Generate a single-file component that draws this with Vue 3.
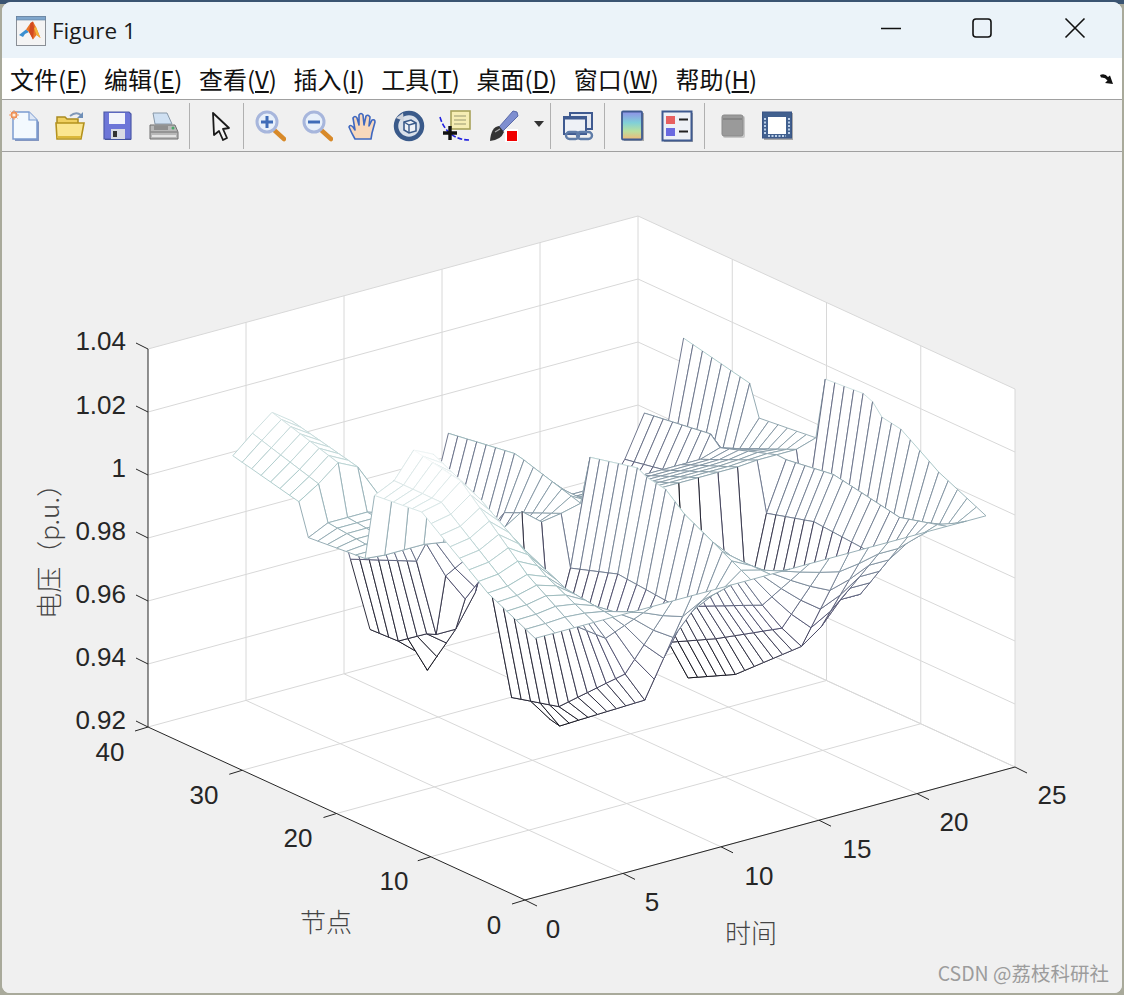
<template>
  <div class="desktop">
    <div class="window">
      <!-- 标题栏 -->
      <div class="titlebar">
        <svg class="logo" viewBox="0 0 30 30">
          <rect x="0.5" y="0.5" width="29" height="29" fill="#f4f4f4" stroke="#8a8f96" />
          <rect x="0.5" y="0.5" width="29" height="3.5" fill="#7fa6cc" stroke="#5f7f9f" stroke-width="0.6" />
          <path d="M3 19 L10 13.5 L13 16 L9 18 L7 21 Z" fill="#3a8fd0" />
          <path d="M10 13.5 L14.5 7 L17 5.5 L20 11 L24.5 22 L20.5 19 L17 23.5 L13 16 Z" fill="#e8752a" />
          <path d="M14.5 7 L17 5.5 L18 12 L17 23.5 L13 16 Z" fill="#d24a20" />
          <path d="M18 12 L20 11 L24.5 22 L20.5 19 Z" fill="#f2b53a" />
        </svg>
        <span class="title">Figure 1</span>
        <div class="controls">
          <svg class="ctrl" viewBox="0 0 20 20"><path d="M0 10.5 H20" /></svg>
          <svg class="ctrl" viewBox="0 0 20 20"><rect x="1" y="1" width="18" height="18" rx="3" /></svg>
          <svg class="ctrl" viewBox="0 0 20 20"><path d="M0.5 0.5 L19.5 19.5 M19.5 0.5 L0.5 19.5" /></svg>
        </div>
      </div>

      <!-- 菜单栏 -->
      <div class="menubar">
        <span v-for="m in menus" :key="m.name" class="menu">{{ m.name }}(<u>{{ m.key }}</u>)</span>
        <svg class="dock" viewBox="0 0 16 14">
          <path d="M1 3 Q6 1 9 5 L11 3.5 L14 12 L6 11 L8.5 8.5 Q6 5 2 5.5 Z" fill="#111" />
        </svg>
      </div>

      <!-- 工具栏 -->
      <div class="toolbar">
        <template v-for="t in tools" :key="t.id">
          <div v-if="t.id.startsWith('sep')" class="sep" :style="{ marginLeft: t.gap + 'px' }"></div>
          <svg v-else-if="t.id === 'drop'" class="drop" viewBox="0 0 12 8" :style="{ marginLeft: t.gap + 'px' }">
            <path d="M1 1 H11 L6 7 Z" fill="#333" />
          </svg>
          <svg v-else class="tool" viewBox="0 0 32 32" :style="{ marginLeft: t.gap + 'px' }">
            <g v-if="t.id === 'new'">
              <path d="M6 4 H22 L30 12 V31 H6 Z" fill="#8396c0" />
              <path d="M4 2 H20 L28 10 V29 H4 Z" fill="#f3f9fe" stroke="#7b9bd0" stroke-width="1.5" />
              <path d="M20 2 V10 H28" fill="#dfe8f6" stroke="#7b9bd0" stroke-width="1.2" />
              <circle cx="5" cy="5" r="3.4" fill="#f08a4a" />
              <path d="M5 0 V10 M0 5 H10 M1.5 1.5 L8.5 8.5 M8.5 1.5 L1.5 8.5" stroke="#f0a070" stroke-width="1" />
              <circle cx="5" cy="5" r="1.6" fill="#fff1e0" />
            </g>
            <g v-else-if="t.id === 'open'">
              <path d="M3 13 V7 H11 L13 9 H24 V14" fill="#f0d060" stroke="#a98a20" stroke-width="1.5" />
              <path d="M16 6 Q22 1 27 5" fill="none" stroke="#8098b8" stroke-width="1.8" />
              <path d="M29 2 V8 H23 Z" fill="#6f8fb8" />
              <path d="M2 13 H30 L27 29 H3 Z" fill="#fbe690" stroke="#b4921e" stroke-width="1.6" />
              <path d="M3 27 H27" stroke="#dcb83a" stroke-width="2" />
            </g>
            <g v-else-if="t.id === 'save'">
              <path d="M3 3 H29 V30 H3 Z" fill="#3c4c90" />
              <path d="M2 2 H27 L29 4 V29 H2 Z" fill="#6d76d8" stroke="#4d5aa8" stroke-width="1.2" />
              <rect x="7" y="3" width="16" height="11" fill="#f2f4fb" />
              <rect x="9" y="19" width="14" height="10" fill="#d8dae4" />
              <rect x="11" y="21" width="4" height="6" fill="#333" />
            </g>
            <g v-else-if="t.id === 'print'">
              <path d="M8 14 L6 3 H20 L25 14 Z" fill="#cfe0f2" stroke="#8898a8" />
              <path d="M3 15 H28 L31 22 V29 H3 Z" fill="#b8b8b8" stroke="#6f6f6f" />
              <path d="M3 22 H31" stroke="#8a8a8a" stroke-width="1.5" />
              <rect x="7" y="16" width="14" height="4" fill="#8f8f8f" />
              <circle cx="26" cy="18" r="1.5" fill="#4aa86a" />
              <path d="M5 26 H29" stroke="#e4e4e4" stroke-width="2" />
            </g>
            <g v-else-if="t.id === 'arrow'">
              <path d="M9 3 L25 18 L19 19 L23 28 L19 30 L15 21 L10 25 Z" fill="#f4f4f4" stroke="#1a1a1a" stroke-width="1.8" stroke-linejoin="round" />
            </g>
            <g v-else-if="t.id === 'zoomin' || t.id === 'zoomout'">
              <path d="M19 19 L30 29" stroke="#d88a2a" stroke-width="4.5" stroke-linecap="round" />
              <circle cx="13" cy="12" r="10" fill="#e8f0fa" stroke="#a7b6dc" stroke-width="3" />
              <path d="M7 12 H19" stroke="#3f6cb8" stroke-width="3" />
              <path v-if="t.id === 'zoomin'" d="M13 6 V18" stroke="#3f6cb8" stroke-width="3" />
            </g>
            <g v-else-if="t.id === 'hand'">
              <path d="M8 29 Q4 22 2 17 Q3 14 6 17 L8 20 L6 8 Q8 5 10 8 L12 15 L12 5 Q14 2 16 5 L17 15 L19 6 Q21 4 23 7 L22 16 L25 10 Q28 9 28 12 L25 23 L24 29 Z" fill="#f8d8bc" stroke="#3f68c0" stroke-width="1.6" stroke-linejoin="round" />
            </g>
            <g v-else-if="t.id === 'rotate'">
              <circle cx="16" cy="16" r="13" fill="#d9e0ea" stroke="#3a5a8a" stroke-width="4.5" />
              <path d="M3 8 L10 3 L11 11 Z" fill="#d0d4dc" />
              <path d="M11 12 L18 10 L23 13 V21 L16 23 L11 20 Z" fill="#eef1f6" stroke="#3a5a8a" stroke-width="1.6" />
              <path d="M11 12 L16 15 L23 13 M16 15 V23" fill="none" stroke="#3a5a8a" stroke-width="1.4" />
            </g>
            <g v-else-if="t.id === 'datatip'">
              <rect x="12" y="1" width="19" height="18" fill="#f6edb4" stroke="#a8a25a" stroke-width="1.6" />
              <path d="M15 6 H27 M15 10 H27 M15 14 H27" stroke="#b8b486" stroke-width="1.6" />
              <path d="M1 7 Q4 18 12 24 Q20 30 30 30" fill="none" stroke="#2222e0" stroke-width="1.6" stroke-dasharray="5 2" />
              <path d="M4 23 H18 M11 16 V30" stroke="#111" stroke-width="3.4" />
            </g>
            <g v-else-if="t.id === 'brush'">
              <path d="M30 2 L26 1 L12 17 L16 21 L31 6 Z" fill="#7f8fd0" stroke="#5a6aa8" />
              <path d="M12 16 Q4 17 3 31 Q14 30 17 22 Z" fill="#333" />
              <path d="M8 22 L13 19" stroke="#aaa" stroke-width="1.2" />
              <rect x="18" y="19" width="13" height="13" fill="#fff" />
              <rect x="20" y="21" width="10" height="10" fill="#f00000" />
            </g>
            <g v-else-if="t.id === 'link'">
              <rect x="8" y="3" width="22" height="16" fill="#e4e8f0" stroke="#3f5a90" stroke-width="2" />
              <rect x="2" y="7" width="22" height="17" fill="#eef1f6" stroke="#3f5a90" stroke-width="2" />
              <path d="M2 8 H24" stroke="#3f5a90" stroke-width="3" />
              <rect x="4" y="22" width="13" height="7" rx="3.5" fill="none" stroke="#5f7ca8" stroke-width="2.4" />
              <rect x="15" y="22" width="15" height="7" rx="3.5" fill="none" stroke="#5f7ca8" stroke-width="2.4" />
            </g>
            <g v-else-if="t.id === 'colorbar'">
              <defs>
                <linearGradient id="cbar" x1="0" y1="0" x2="0" y2="1">
                  <stop offset="0" stop-color="#8f8fe8" />
                  <stop offset="0.4" stop-color="#80d0d8" />
                  <stop offset="0.7" stop-color="#b8e0a0" />
                  <stop offset="1" stop-color="#f0b878" />
                </linearGradient>
              </defs>
              <rect x="8" y="3" width="20" height="28" fill="#a8a8a8" />
              <rect x="6" y="1.5" width="20" height="28" rx="1" fill="url(#cbar)" stroke="#3f5a90" stroke-width="1.8" />
            </g>
            <g v-else-if="t.id === 'legend'">
              <rect x="3" y="3" width="29" height="29" fill="#a8a8a8" />
              <rect x="1.5" y="1.5" width="29" height="29" fill="#eef1f6" stroke="#3f5a90" stroke-width="2" />
              <rect x="5" y="6" width="9" height="8" fill="#e86060" />
              <rect x="5" y="18" width="9" height="8" fill="#6a6ae0" />
              <path d="M18 9.5 H27 M18 21.5 H27" stroke="#222" stroke-width="2.2" />
            </g>
            <g v-else-if="t.id === 'grey'">
              <rect x="6" y="6" width="22" height="22" rx="2" fill="#c8c8c8" />
              <rect x="5" y="5" width="21" height="21" rx="2" fill="#9a9a9a" stroke="#8a8a8a" />
              <path d="M6 9 H25" stroke="#7f7f7f" stroke-width="1.6" />
            </g>
            <g v-else-if="t.id === 'plot'">
              <rect x="3" y="3" width="29" height="27" fill="#a8a8a8" />
              <rect x="1.5" y="2" width="29" height="26" fill="#41608f" stroke="#3a5585" />
              <rect x="7" y="7" width="18" height="17" fill="#fff" />
              <path d="M4 8 V24 M28 8 V24" stroke="#bcd0ea" stroke-width="2" stroke-dasharray="2 1.5" />
              <path d="M7 26 H25" stroke="#bcd0ea" stroke-width="2" stroke-dasharray="2 1.5" />
            </g>
          </svg>
        </template>
      </div>

      <!-- 绘图区 -->
      <div class="figure">
        <svg class="plot" viewBox="2 152 1120 841">
          <polygon :points="boxOutline" fill="#fff" />
          <line v-for="(g, i) in grids" :key="'g' + i" :x1="g[0]" :y1="g[1]" :x2="g[2]" :y2="g[3]" class="grid" />
          <g v-for="(c, i) in cells" :key="'c' + i">
            <polygon :points="c.pts" fill="#fff" />
            <line v-for="(e, j) in c.edges" :key="j" :x1="e[0]" :y1="e[1]" :x2="e[2]" :y2="e[3]" :stroke="e[4]" stroke-width="0.95" />
          </g>
          <line v-for="(a, i) in axes" :key="'a' + i" :x1="a[0]" :y1="a[1]" :x2="a[2]" :y2="a[3]" class="axis" />
          <text v-for="l in zLabels" :key="l.t" :x="126" :y="l.y" text-anchor="end" class="tick">{{ l.t }}</text>
          <text v-for="l in flatLabels" :key="l.k" :x="l.x" :y="l.y" text-anchor="middle" class="tick">{{ l.t }}</text>
          <text x="326" y="932" text-anchor="middle" class="cjk">节点</text>
          <text x="751" y="943" text-anchor="middle" class="cjk">时间</text>
          <text transform="translate(59 545) rotate(-90)" text-anchor="middle" class="cjk">电压（p.u.）</text>
          <text x="1109" y="981" text-anchor="end" class="mark">CSDN @荔枝科研社</text>
        </svg>
      </div>
    </div>
  </div>
</template>

<script setup>
const menus = [
  { name: '文件', key: 'F' },
  { name: '编辑', key: 'E' },
  { name: '查看', key: 'V' },
  { name: '插入', key: 'I' },
  { name: '工具', key: 'T' },
  { name: '桌面', key: 'D' },
  { name: '窗口', key: 'W' },
  { name: '帮助', key: 'H' }
]

// gap = 与前一个元素的间距
const tools = [
  { id: 'new', gap: 7 }, { id: 'open', gap: 13 }, { id: 'save', gap: 16 }, { id: 'print', gap: 13 },
  { id: 'sep1', gap: 10 }, { id: 'arrow', gap: 14 }, { id: 'sep2', gap: 7 },
  { id: 'zoomin', gap: 10 }, { id: 'zoomout', gap: 15 }, { id: 'hand', gap: 14 }, { id: 'rotate', gap: 14 },
  { id: 'datatip', gap: 14 }, { id: 'brush', gap: 16 }, { id: 'drop', gap: 14 }, { id: 'sep3', gap: 5 },
  { id: 'link', gap: 11 }, { id: 'sep4', gap: 10 }, { id: 'colorbar', gap: 11 }, { id: 'legend', gap: 13 },
  { id: 'sep5', gap: 11 }, { id: 'grey', gap: 12 }, { id: 'plot', gap: 12 }
]

// 坐标轴投影：t 时间，n 节点，z 电压
const px = (t, n) => 525 + 19.6 * t - 9.45 * n
const py = (t, n, z) => 900 - 5.33 * t - 4.33 * n - 3150 * (z - 0.92)

const ctrlN = [1, 6, 13, 18, 19, 25, 26, 33]
// 每行一个时刻，列对应 ctrlN
const table = [
  [1, 1.0075, 1.0236, 1.022, 1.0006, 0.999, 1.009, 1.014],
  [1, 1.008, 1.025, 1.025, 1.0, 1.002, 1.013, 1.0194],
  [1, 1.01, 1.03, 1.033, 1.0, 1.002, 1.018, 1.0244],
  [1, 1.0076, 1.0225, 1.03, 1.0, 1.002, 1.015, 1.02],
  [1, 1.002, 1.012, 1.017, 0.999, 1.0, 1.005, 1.01],
  [1, 0.993, 0.998, 1.0, 0.998, 0.995, 0.995, 0.995],
  [1, 0.983, 0.982, 0.98, 0.998, 0.987, 0.98, 0.971],
  [1, 0.97, 0.95, 0.946, 0.998, 0.975, 0.955, 0.947],
  [1, 0.96, 0.944, 0.94, 0.997, 0.966, 0.955, 0.95],
  [1, 0.977, 0.968, 0.96, 0.997, 0.98, 0.965, 0.955],
  [1, 0.985, 0.987, 0.982, 0.998, 0.99, 0.985, 0.979],
  [1, 1.008, 1.019, 1.0155, 0.9995, 1.005, 1.0057, 1.0025],
  [1, 1.0, 1.0, 0.998, 0.9975, 0.995, 0.99, 0.985],
  [1, 0.99, 0.985, 0.98, 0.9975, 0.99, 0.975, 0.97],
  [1, 0.98, 0.97, 0.965, 0.9975, 0.99, 0.965, 0.96],
  [1, 0.971, 0.958, 0.95, 0.9975, 0.99, 0.955, 0.95],
  [1, 0.9635, 0.945, 0.937, 0.9975, 0.99, 0.95, 0.945],
  [1, 0.968, 0.952, 0.945, 0.9975, 0.99, 0.96, 0.955],
  [1, 0.975, 0.965, 0.96, 0.9975, 0.99, 0.965, 0.96],
  [1, 0.975, 0.96, 0.955, 0.9975, 0.99, 0.975, 0.97],
  [1, 0.985, 0.9867, 0.9825, 0.998, 0.99, 0.983, 0.979],
  [1, 0.996, 1.0, 0.9978, 0.998, 0.992, 0.995, 0.992],
  [1, 0.99, 0.982, 0.978, 0.998, 0.99, 0.985, 0.98],
  [1, 1.007, 1.0212, 1.02, 1.0, 0.998, 1.0077, 1.0124]
]

// 局部修正：t 时刻，节点 n 附近 r 范围内的三角形起伏
const bumps = [
  { t: 9, n: 29, r: 3, dz: -0.015 },
  { t: 8, n: 30, r: 3, dz: -0.003 },
  { t: 9, n: 18, r: 2, dz: 0.01 },
  { t: 9, n: 15, r: 2, dz: -0.003 },
  { t: 24, n: 12, r: 2, dz: -0.003 },
  { t: 12, n: 10, r: 2, dz: 0.002 }
]

const zAt = (t, n) => {
  const row = table[t - 1]
  let i = 0
  while (i < ctrlN.length - 2 && n > ctrlN[i + 1]) i++
  const r = (n - ctrlN[i]) / (ctrlN[i + 1] - ctrlN[i])
  let z = row[i] + (row[i + 1] - row[i]) * r
  for (const b of bumps) {
    const d = Math.abs(n - b.n)
    if (b.t === t && d < b.r) z += b.dz * (1 - d / b.r)
  }
  return z
}

// bone 色图
const bone = (z) => {
  const v = Math.min(1, Math.max(0, (z - 0.93) / 0.105))
  const stops = [
    [0, 0, 0, 0.01],
    [0.375, 0.319, 0.319, 0.444],
    [0.75, 0.652, 0.777, 0.777],
    [1, 1, 1, 1]
  ]
  let i = 0
  while (i < 2 && v > stops[i + 1][0]) i++
  const a = stops[i]
  const b = stops[i + 1]
  const r = (v - a[0]) / (b[0] - a[0])
  const ch = (k) => Math.round(255 * (a[k] + (b[k] - a[k]) * r))
  return `rgb(${ch(1)},${ch(2)},${ch(3)})`
}

const round = (v) => Math.round(v * 10) / 10

// 由远及近画，白色面片遮挡后面的线
const cells = []
for (let t = 23; t >= 1; t--) {
  for (let n = 32; n >= 1; n--) {
    const corners = [[t, n], [t + 1, n], [t + 1, n + 1], [t, n + 1]].map(([a, b]) => {
      const z = zAt(a, b)
      return { x: round(px(a, b)), y: round(py(a, b, z)), z }
    })
    const edges = corners.map((p, i) => {
      const q = corners[(i + 1) % 4]
      return [p.x, p.y, q.x, q.y, bone(Math.min(p.z, q.z))]
    })
    cells.push({ pts: corners.map((p) => `${p.x},${p.y}`).join(' '), edges })
  }
}

const L = [148, 727]
const B = [638, 594]
const R = [1015, 767]
const F = [525, 900]
const H = 378
const boxOutline = [
  [L[0], L[1] - H], [B[0], B[1] - H], [R[0], R[1] - H], R, F, L
].map((p) => p.join(',')).join(' ')

const grids = []
for (let k = 0; k <= 6; k++) {
  const d = 63 * k
  grids.push([L[0], L[1] - d, B[0], B[1] - d])
  grids.push([B[0], B[1] - d, R[0], R[1] - d])
}
for (let k = 1; k <= 5; k++) {
  const dx = 98 * k
  const dy = 26.6 * k
  grids.push([L[0] + dx, L[1] - dy, L[0] + dx, L[1] - dy - H])
  grids.push([F[0] + dx, F[1] - dy, L[0] + dx, L[1] - dy])
}
for (let k = 1; k <= 4; k++) {
  const dx = 94.25 * k
  const dy = 43.25 * k
  grids.push([B[0] + dx, B[1] + dy, B[0] + dx, B[1] + dy - H])
  grids.push([L[0] + dx, L[1] + dy, B[0] + dx, B[1] + dy])
}

const axes = [
  [L[0], L[1] - H, L[0], L[1]],
  [L[0], L[1], F[0], F[1]],
  [F[0], F[1], R[0], R[1]]
]
for (let k = 0; k <= 6; k++) axes.push([L[0], L[1] - 63 * k, L[0] - 12, L[1] - 63 * k - 6])
for (let k = 0; k <= 4; k++) {
  const x = F[0] - 94.25 * k
  const y = F[1] - 43.25 * k
  axes.push([x, y, x - 13, y + 4])
}
for (let k = 0; k <= 5; k++) {
  const x = F[0] + 98 * k
  const y = F[1] - 26.6 * k
  axes.push([x, y, x + 12, y + 6])
}

const zLabels = ['0.92', '0.94', '0.96', '0.98', '1', '1.02', '1.04'].map((t, i) => ({
  t,
  y: 729 - 63.1 * i
}))

const flatLabels = [
  { t: '40', x: 110, y: 761 }, { t: '30', x: 204, y: 804 }, { t: '20', x: 298, y: 847 },
  { t: '10', x: 394, y: 890 }, { t: '0', x: 494, y: 934 },
  { t: '0', x: 553, y: 938 }, { t: '5', x: 652, y: 911 }, { t: '10', x: 759, y: 885 },
  { t: '15', x: 857, y: 858 }, { t: '20', x: 954, y: 831 }, { t: '25', x: 1052, y: 804 }
].map((l, i) => ({ ...l, k: i }))
</script>

<style scoped>
.desktop {
  width: 1124px;
  height: 995px;
  box-sizing: border-box;
  padding: 2px;
  background: linear-gradient(#3a5472 0 4px, #a9aa9b 4px);
  overflow: hidden;
}

.window {
  height: 100%;
  display: flex;
  flex-direction: column;
  border-radius: 9px 9px 8px 8px;
  overflow: hidden;
  background: #f0f0f0;
}

.titlebar {
  height: 56px;
  flex: none;
  display: flex;
  align-items: center;
  background: #ebf3f9;
  padding-left: 14px;
}

.logo {
  width: 30px;
  height: 30px;
  margin-top: 1px;
}

.title {
  margin-left: 6px;
  font: 22.5px "Open Sans", "Noto Sans", sans-serif;
  color: #1a1a1a;
}

.controls {
  margin-left: auto;
  display: flex;
  gap: 71px;
  padding-right: 37px;
}

.ctrl {
  width: 20px;
  height: 20px;
  fill: none;
  stroke: #111;
  stroke-width: 1.6;
  overflow: visible;
  margin-top: -4px;
}

.ctrl:last-child {
  margin-left: 2px;
}

.menubar {
  height: 42px;
  flex: none;
  box-sizing: border-box;
  display: flex;
  align-items: center;
  gap: 16.5px;
  padding-left: 8px;
  background: #fff;
  border-bottom: 1px solid #a0a0a0;
}

.menu {
  font: 24px "Noto Sans CJK SC", "Liberation Sans", sans-serif;
  color: #111;
  white-space: nowrap;
}

.dock {
  width: 16px;
  height: 14px;
  margin-left: auto;
  margin-right: 7px;
}

.toolbar {
  height: 52px;
  flex: none;
  box-sizing: border-box;
  display: flex;
  align-items: center;
  background: #f0f0f0;
  border-bottom: 1px solid #a0a0a0;
}

.tool {
  width: 32px;
  height: 32px;
  flex: none;
}

.drop {
  width: 12px;
  height: 8px;
  flex: none;
  margin-top: -4px;
}

.sep {
  width: 1px;
  height: 46px;
  flex: none;
  background: #b0b0b0;
}

.figure {
  flex: 1;
  min-height: 0;
  background: #f0f0f0;
}

.plot {
  display: block;
  width: 1120px;
  height: 841px;
}

.grid {
  stroke: #d8d8d8;
  stroke-width: 1;
}

.axis {
  stroke: #262626;
  stroke-width: 1;
}

.tick {
  font: 26px "Liberation Sans", Arial, sans-serif;
  fill: #262626;
}

.cjk {
  font: 26px "Noto Sans CJK SC", "Liberation Sans", sans-serif;
  font-weight: 300;
  fill: #444;
}

.mark {
  font: 19.5px "Noto Sans CJK SC", "Liberation Sans", sans-serif;
  fill: #9c9c9c;
}
</style>

<style>
html,
body {
  background: #a9aa9b;
}
</style>
